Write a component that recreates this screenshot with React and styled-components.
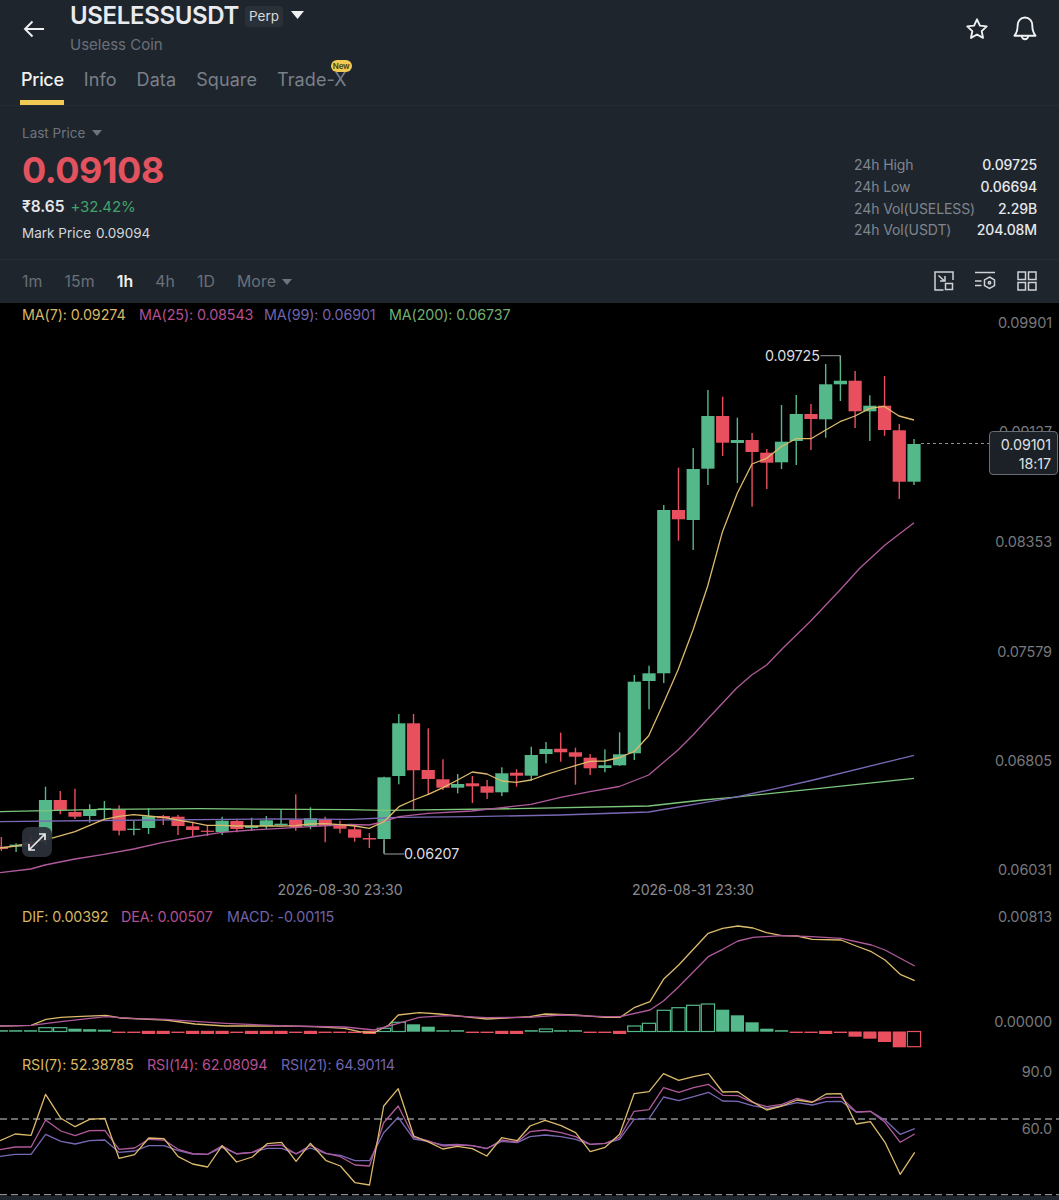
import React from 'react';
import styled, { createGlobalStyle } from 'styled-components';

const Global = createGlobalStyle`
  html, body { margin: 0; padding: 0; background: #000; }
  * { box-sizing: border-box; }
  body { font-family: Inter, "Noto Sans", "Liberation Sans", sans-serif; }
`;

const Page = styled.div`width: 1059px; height: 1200px; display: flex; flex-direction: column; background: #000; overflow: hidden;`;
const Top = styled.div`background: #1f252d; color: #fff;`;
const Header = styled.header`height: 64px; display: flex; align-items: flex-start;`;
const Back = styled.button`width: 70px; height: 58px; padding: 0 0 0 23px; border: 0; background: none; display: flex; align-items: center; color: #f0f1f3;`;
const TitleBlock = styled.div`flex: 1; display: flex; flex-direction: column;`;
const TitleRow = styled.div`height: 32px; display: flex; align-items: center;`;
const Symbol = styled.h1`margin: 0; font-size: 24px; font-weight: 600; line-height: 32px; letter-spacing: -0.35px; color: #e9ebee;`;
const Badge = styled.span`margin-left: 6px; width: 38px; height: 21px; border-radius: 3px; background: #2a3038; color: #d5d8dc; font-size: 13.5px; line-height: 21px; text-align: center;`;
const TitleCaret = styled.svg`margin-left: 8px; width: 13px; height: 8px; margin-top: -2px; fill: #eef0f2;`;
const SubTitle = styled.div`margin-top: 3px; font-size: 15px; line-height: 20px; color: #69707a;`;
const Actions = styled.div`display: flex; align-items: center; gap: 24px; height: 58px; padding-right: 22px; color: #f0f1f3;`;
const Tabs = styled.nav`height: 42px; padding-left: 21px; display: flex; gap: 20px; border-bottom: 1px solid #262c34;`;
const Tab = styled.div`position: relative; padding-top: 5px; font-size: 18px; line-height: 22px; letter-spacing: ${p => (p.$active ? '-0.3px' : '0.1px')}; color: ${p => (p.$active ? '#eef0f2' : '#79808a')}; font-weight: ${p => (p.$active ? 500 : 400)};
  ${p => p.$active ? `&::after { content: ''; position: absolute; left: -1px; right: 0; bottom: 0; height: 5px; background: #f0ca52; }` : ''}`;
const NewBadge = styled.span`position: absolute; right: -5px; top: -4px; width: 21px; height: 12px; border-radius: 6px; background: #f0ca52; color: #4a3d10; font-size: 8px; font-weight: 600; line-height: 12px; text-align: center; letter-spacing: -0.2px;`;
const PriceSection = styled.section`height: 154px; padding: 0 22px; display: flex; justify-content: space-between; border-bottom: 1px solid #262c34;`;
const PriceLeft = styled.div`display: flex; flex-direction: column; padding-top: 18px;`;
const LastPrice = styled.div`font-size: 13.5px; line-height: 18px; color: #6d747e; display: flex; align-items: center; gap: 7px;`;
const SmallCaret = styled.svg`width: 10px; height: 6px; fill: ${p => p.$color || '#6d747e'};`;
const BigPrice = styled.div`margin-top: 6px; font-size: 36px; font-weight: 700; line-height: 44px; letter-spacing: -0.45px; color: #e2535f;`;
const FiatRow = styled.div`margin-top: 5px; display: flex; gap: 6px; font-size: 15px; line-height: 20px;`;
const Fiat = styled.span`font-size: 15.5px; font-weight: 600; color: #e4e6e9;`;
const Change = styled.span`color: #42a26c; letter-spacing: -0.15px;`;
const MarkRow = styled.div`margin-top: 7px; display: flex; gap: 5px; font-size: 13.5px; line-height: 18px; color: #d4d7db;`;
const Stats = styled.div`padding-top: 48px; width: 183px; display: flex; flex-direction: column;`;
const StatRow = styled.div`height: 21.7px; display: flex; justify-content: space-between; align-items: center; font-size: 14px; letter-spacing: -0.1px;`;
const StatLabel = styled.span`color: #7e858e;`;
const StatValue = styled.span`color: #e6e8eb; font-weight: 500;`;
const IntervalBar = styled.div`height: 43px; padding: 0 22px; display: flex; align-items: center; justify-content: space-between;`;
const Intervals = styled.div`display: flex; align-items: center; gap: 22px;`;
const Interval = styled.span`font-size: 15.8px; color: ${p => (p.$active ? '#eef0f2' : '#69707a')}; font-weight: ${p => (p.$active ? 600 : 400)}; display: flex; align-items: center; gap: 6px; letter-spacing: 0.1px;`;
const Tools = styled.div`display: flex; align-items: center; gap: 21px; margin-top: -2px; color: #cfd2d6;`;
const Pane = styled.div`position: relative; height: ${p => p.$h}px; flex: none;`;
const ChartSvg = styled.svg`display: block; width: 1059px; height: 100%;`;
const Legend = styled.div`position: absolute; left: 22px; top: ${p => p.$top}px; display: flex; font-size: 14.3px; line-height: 18px; letter-spacing: -0.1px;`;
const LegendItem = styled.span`color: ${p => p.$color}; width: ${p => p.$w}px;`;
const Footer = styled.div`flex: 1; background: #1f252d;`;
const ExpandBtn = styled.div`position: absolute; left: 22px; top: 524px; width: 30px; height: 30px; border-radius: 7px; background: rgba(44,50,58,.93); display: flex; align-items: center; justify-content: center; color: #e8e9eb;`;
const PriceTag = styled.div`position: absolute; left: 989px; top: 128px; width: 69px; height: 44px; border: 1px solid #6a6e74; border-radius: 4px; background: #1c2027; color: #dfe1e4; font-size: 14.3px; line-height: 19px; text-align: right; letter-spacing: -0.1px; padding: 3px 6px 0 0;`;

const Wick = styled.rect`fill: ${p => p.$c};`;
const Body = styled.rect`fill: ${p => p.$c};`;
const Bar = styled.rect`fill: ${p => (p.$hollow ? 'none' : p.$c)}; stroke: ${p => (p.$hollow ? p.$c : 'none')}; stroke-width: 1.2;`;
const Curve = styled.polyline`fill: none; stroke: ${p => p.$c}; stroke-width: ${p => p.$w || 1.3}; stroke-linejoin: round;`;
const Guide = styled.polyline`fill: none; stroke: ${p => p.$c || '#8a8d91'}; stroke-width: 1;`;
const Dash = styled.line`stroke: ${p => p.$c || '#8d8f92'}; stroke-width: ${p => p.$w || 1.3}; stroke-dasharray: ${p => p.$d || '7 4'};`;
const AxisText = styled.text`fill: #77797c; font-size: 14.5px; text-anchor: end; letter-spacing: -0.1px;`;
const DateText = styled.text`fill: #8a8c90; font-size: 14.2px; text-anchor: middle; letter-spacing: -0.1px;`;
const MarkText = styled.text`fill: #dcdee0; font-size: 14.3px; letter-spacing: -0.1px;`;

const G = '#55b88a';
const R = '#e8505f';
const YEL = '#dcba6b';
const PNK = '#b05a9c';
const PUR = '#7a68b4';
const GRN = '#7cc67c';

const candles = [
  [R,837,846.7,849,851],[G,843.3,844.7,846.7,852],[R,835,842,846,850],[G,786.7,800,838,845],
  [R,791,800,810,814.3],[R,788.7,812,816.7,819],[G,804.3,810,816,822.7],[G,801,808.3,809.6,819.3],
  [R,805.3,809.7,830.7,835.3],[G,820.7,828.7,830,835.3],[G,808.3,816.3,828,834],[R,815,816,818.3,825],
  [R,815,816.7,826,835],[R,821.7,826.3,830,836],[R,825,830.7,831.9,836],[G,816.7,820.7,832,835],
  [R,819,821,829,832.3],[G,817.7,826,828,830.7],[G,816,820.3,826,829],[G,809.3,823.7,825,825],
  [R,794.3,820,827,830.7],[G,807.3,818.3,826,829.3],[R,816.7,819.3,826,842.3],[R,820.7,824,828.7,833.3],
  [R,825,829.3,837.7,841.7],[R,833,838,839.5,848],[G,776.7,777.3,839,853.3],[G,714,723.3,776,784.3],
  [R,714,723.3,770.3,810],[R,728.3,770,779,795],[R,759.3,779.3,787.7,790],[G,774,784,787.7,793.3],
  [R,776,783.3,786.3,803],[R,780,786.3,792.7,799],[G,767.3,773.3,792.3,796],[R,769.3,772.7,775.7,786.7],
  [G,746.7,755,775.7,780.7],[G,742,749,754,763.3],[R,732.7,748.7,752.3,761.7],[R,747.7,752.3,756.7,784.7],
  [R,754,757.7,768.3,775],[G,749.3,765.3,768,772.3],[G,732.3,754.3,765.3,766],[G,675,681.7,753.3,760],
  [G,665.7,673.3,681,709.3],[G,505,510,673.3,683],[R,467.7,510,519.3,540.7],[G,448,469,520,550],
  [G,390,416,468.7,485],[R,396.7,416,442.7,456],[G,417.7,440,443,483],[R,433,440,452,506.7],
  [R,449,452.7,462.7,489],[G,405,441.7,462.3,469],[G,395,414,441,465],[R,404,414,419,450],
  [G,364,384.3,419.3,437.7],[G,355.7,380.7,384.3,401],[R,371,380.7,411.3,428],[G,395.3,405.7,411.3,441],
  [R,376,405.7,430,435.7],[R,424,430.3,481.7,499],[G,439,444,481.7,485],
];
const cx = i => 914 - 14.72 * (candles.length - 1 - i);

const ma7 = [[0,848],[15.7,846],[30,843],[45,840],[52,838],[75,831.7],[104,819.3],[119,816.3],[133.7,814.7],[148,816],[163,817.3],[177.7,820],[192,822.3],[207,825.3],[222,825.3],[237,826],[266,826],[281,826],[295.7,825.7],[310,824],[325,823.7],[339.7,824.7],[350,825.5],[355,826],[369.3,828.3],[384,821.7],[399,806.7],[413.7,800],[428.3,794.3],[443,787.7],[457.7,780],[472.3,772],[487,774],[501.7,781],[516.3,782.3],[531,780],[545.7,774.7],[560.7,770],[575.3,765.7],[590,761.3],[604.7,761],[619.3,757.5],[634,751.7],[648.7,735.7],[663.7,702.7],[678,670],[693,630],[707.7,586],[722.5,531.7],[737.3,493.3],[752,464],[766.7,458.3],[781,446.7],[796,438.7],[811,438.7],[825.7,430],[840,421.7],[855,416],[869.7,408.3],[884,406.3],[899,416],[914,420]];
const ma25 = [[0,872.7],[30.7,869],[45,865],[75,859],[104,854.3],[133.7,849],[163,842.3],[192,837],[222,832.3],[251.7,830],[281,828.3],[310,826.7],[350,824.5],[369,825],[384,821.7],[399,816.7],[428,813.3],[472,811],[501.7,807.7],[531,804.3],[560.7,797.3],[590,791.7],[619.3,786.5],[648.7,775],[678,750],[693,735],[707.7,719],[736.7,688],[751.7,675],[766.7,665],[783,648],[810,621.7],[840,590],[860,568],[885,545],[914,522.7]];
const ma99 = [[0,821.7],[100,820.5],[272,819],[350,819.3],[384,818],[399,817.3],[472,816.7],[560,815],[648.7,812],[700,803.3],[733,797.7],[776.7,788.3],[813.3,780],[914,755.3]];
const ma200 = [[0,811.7],[104,809.3],[200,808.7],[350,809.7],[384,810.3],[516,808.7],[648.7,806],[703,800],[733,797.3],[820,788.3],[914,778.3]];

const dx = (pts, o = 0) => pts.map(([x, y]) => [o + x / 2.958, 900 + y / 3]);
const difL = [[0,378],[92,376],[136,358],[180,352],[225,350],[313,346],[357,354],[489,360],[577,372],[666,378],[843,378],[931,380],[1019,385],[1063,395],[1107,398],[1150,375],[1178,345],[1240,338],[1300,342],[1440,357]];
const deaL = [[0,378],[92,376],[180,365],[313,350],[400,356],[489,358],[666,370],[843,378],[1019,381],[1107,390],[1178,370],[1240,352],[1320,347],[1440,353]];
const difR = [[0,350],[45,342],[135,345],[220,352],[267,352],[310,322],[355,305],[395,238],[440,195],[527,100],[570,85],[615,78],[660,84],[700,98],[745,107],[790,108],[835,118],[920,120],[965,138],[1010,155],[1050,180],[1095,223],[1138,242]];
const deaR = [[0,352],[90,345],[220,350],[267,350],[355,330],[395,303],[440,260],[527,170],[570,148],[615,123],[660,112],[745,107],[835,110],[920,115],[1010,135],[1050,150],[1138,198]];

const rsi7L = [[0,722],[45,702],[92,706],[135,583],[180,655],[222,680],[265,658],[310,655],[352,775],[398,764],[440,714],[485,716],[527,770],[570,792],[614,801],[657,737],[700,786],[746,771],[790,731],[833,727],[876,784],[918,730],[965,782],[1007,798],[1050,848],[1093,855],[1135,618],[1178,566],[1224,708],[1265,725],[1310,747],[1353,739],[1397,746],[1440,768],[1484,713],[1530,722]];
const rsi14L = [[0,749],[45,741],[92,741],[135,660],[180,693],[222,707],[265,692],[310,691],[352,748],[398,744],[440,718],[485,720],[527,748],[570,761],[614,763],[657,737],[700,762],[746,757],[790,737],[833,735],[876,762],[918,736],[965,760],[1007,770],[1050,795],[1093,798],[1135,668],[1178,618],[1224,712],[1265,722],[1310,738],[1353,735],[1397,737],[1440,746],[1484,720],[1530,726]];
const rsi21L = [[0,769],[45,763],[92,763],[135,703],[180,724],[222,732],[265,722],[310,720],[352,757],[398,753],[440,737],[485,737],[527,752],[570,762],[614,763],[657,742],[700,761],[746,757],[790,745],[833,745],[876,761],[918,744],[965,761],[1007,766],[1050,782],[1093,782],[1135,698],[1178,652],[1224,717],[1265,724],[1310,735],[1353,733],[1397,737],[1440,745],[1484,724],[1530,728]];
const rsi7R = [[0,678],[45,661],[92,677],[135,698],[178,755],[222,742],[265,703],[308,581],[352,575],[395,521],[440,541],[484,530],[528,521],[570,576],[615,575],[658,605],[700,630],[745,618],[790,600],[835,607],[876,582],[920,581],[965,672],[1007,665],[1050,727],[1095,823],[1138,757]];
const rsi14R = [[0,695],[45,690],[92,698],[135,710],[178,733],[222,730],[265,712],[308,634],[352,629],[395,563],[440,577],[484,563],[528,553],[570,586],[615,587],[658,607],[700,620],[745,613],[790,595],[835,606],[876,592],[920,592],[965,636],[1007,634],[1050,667],[1095,727],[1138,702]];
const rsi21R = [[0,710],[45,705],[92,710],[135,718],[178,733],[222,730],[265,718],[308,658],[352,656],[395,591],[440,602],[484,590],[528,577],[570,603],[615,604],[658,617],[700,625],[745,618],[790,608],[835,615],[876,605],[920,604],[965,636],[1007,634],[1050,660],[1095,703],[1138,686]];

const join = (l, r) => [...dx(l), ...dx(r, 530)];
const pts = a => a.map(([x, y]) => `${x.toFixed(1)},${y.toFixed(1)}`).join(' ');

const thinG = x => ({ x, c: G, t: 1030.2, b: 1031.7 });
const thinR = x => ({ x, c: R, t: 1031.6, b: 1033 });
const midR = x => ({ x, c: R, t: 1030.8, b: 1034 });
const bars = [
  thinG(1.4), thinG(15.7), thinG(30.5),
  { x: 45.5, c: G, t: 1027.7, b: 1031.5, h: 1 }, { x: 60.2, c: G, t: 1027.7, b: 1031.5, h: 1 },
  { x: 75, c: G, t: 1028.7, b: 1031.7 }, { x: 89.7, c: G, t: 1029.2, b: 1031.7 }, { x: 104.4, c: G, t: 1029.7, b: 1031.7 },
  thinR(119), thinR(133.8), midR(148.5), midR(163.2), thinR(178), midR(192.6), midR(207.4), midR(222.1), thinR(236.8),
  midR(251.5), midR(266.3), midR(281), thinR(295.7), midR(310.4), thinR(325.1), thinR(339.8), thinR(354.6), midR(369.3),
  { x: 384, c: G, t: 1028.3, b: 1031.5, h: 1 }, { x: 398.7, c: G, t: 1022.3, b: 1031.5, h: 1 },
  { x: 413.5, c: G, t: 1024.3, b: 1031.7 }, { x: 428.2, c: G, t: 1026.7, b: 1031.7 }, thinG(442.9), thinG(457.6),
  thinR(472.4), thinR(487.1), midR(501.8), midR(516.5), thinG(531.2),
  { x: 546, c: G, t: 1029, b: 1031.7, h: 1 }, thinG(560.7), thinG(575.4), thinR(590.1), thinR(604.8), midR(619.6),
  { x: 634.3, c: G, t: 1026, b: 1031.5, h: 1 }, { x: 649, c: G, t: 1023.3, b: 1031.5, h: 1 },
  { x: 663.8, c: G, t: 1010.3, b: 1031.5, h: 1 }, { x: 678.5, c: G, t: 1007.7, b: 1031.5, h: 1 },
  { x: 693.2, c: G, t: 1005.3, b: 1031.5, h: 1 }, { x: 707.9, c: G, t: 1004, b: 1031.5, h: 1 },
  { x: 722.7, c: G, t: 1009.7, b: 1031.7 }, { x: 737.4, c: G, t: 1015.3, b: 1031.7 }, { x: 752.1, c: G, t: 1022.3, b: 1031.7 },
  { x: 766.8, c: G, t: 1028.7, b: 1031.7 }, thinG(781.6), thinR(796.3), thinR(811), midR(825.7), thinR(840.4),
  { x: 855.1, c: R, t: 1031.5, b: 1036.7 }, { x: 869.9, c: R, t: 1031.5, b: 1038.7 }, { x: 884.6, c: R, t: 1031.5, b: 1042 },
  { x: 899.3, c: R, t: 1031.5, b: 1047.3 }, { x: 914, c: R, t: 1031.5, b: 1046.7, h: 1 },
];

const Caret = ({ $color }) => <SmallCaret $color={$color} viewBox="0 0 10 6"><path d="M0 0h10L5 6z" /></SmallCaret>;

export default function App() {
  return (
    <Page>
      <Global />
      <Top>
        <Header>
          <Back aria-label="Back">
            <svg width="22" height="18" viewBox="0 0 22 18" fill="none" stroke="currentColor" strokeWidth="1.9"><path d="M21 9H2M9.5 1.5 2 9l7.5 7.5" /></svg>
          </Back>
          <TitleBlock>
            <TitleRow>
              <Symbol>USELESSUSDT</Symbol>
              <Badge>Perp</Badge>
              <TitleCaret viewBox="0 0 13 8"><path d="M0 0h13L6.5 8z" /></TitleCaret>
            </TitleRow>
            <SubTitle>Useless Coin</SubTitle>
          </TitleBlock>
          <Actions>
            <svg width="24" height="24" viewBox="0 0 24 24" fill="none" stroke="currentColor" strokeWidth="1.9" strokeLinejoin="round"><path d="M12 2.3l2.9 6.3 6.8.8-5 4.7 1.3 6.8-6-3.4-6 3.4 1.3-6.8-5-4.7 6.8-.8z" /></svg>
            <svg width="24" height="26" viewBox="0 0 24 26" fill="none" stroke="currentColor" strokeWidth="1.9" strokeLinejoin="round"><path d="M12 1.5c-4.6 0-7.3 3.5-7.3 7.8 0 5-1.2 8-3.2 10.4h21c-2-2.4-3.2-5.4-3.2-10.4 0-4.3-2.7-7.8-7.3-7.8z" /><path d="M8.8 20a3.2 3.2 0 0 0 6.4 0" /></svg>
          </Actions>
        </Header>
        <Tabs>
          <Tab $active>Price</Tab>
          <Tab>Info</Tab>
          <Tab>Data</Tab>
          <Tab>Square</Tab>
          <Tab>Trade-X<NewBadge>New</NewBadge></Tab>
        </Tabs>
        <PriceSection>
          <PriceLeft>
            <LastPrice>Last Price <Caret /></LastPrice>
            <BigPrice>0.09108</BigPrice>
            <FiatRow><Fiat>₹8.65</Fiat><Change>+32.42%</Change></FiatRow>
            <MarkRow><span>Mark Price</span><span>0.09094</span></MarkRow>
          </PriceLeft>
          <Stats>
            <StatRow><StatLabel>24h High</StatLabel><StatValue>0.09725</StatValue></StatRow>
            <StatRow><StatLabel>24h Low</StatLabel><StatValue>0.06694</StatValue></StatRow>
            <StatRow><StatLabel>24h Vol(USELESS)</StatLabel><StatValue>2.29B</StatValue></StatRow>
            <StatRow><StatLabel>24h Vol(USDT)</StatLabel><StatValue>204.08M</StatValue></StatRow>
          </Stats>
        </PriceSection>
        <IntervalBar>
          <Intervals>
            <Interval>1m</Interval>
            <Interval>15m</Interval>
            <Interval $active>1h</Interval>
            <Interval>4h</Interval>
            <Interval>1D</Interval>
            <Interval>More <Caret /></Interval>
          </Intervals>
          <Tools>
            <svg width="20" height="20" viewBox="0 0 20 20" fill="none" stroke="currentColor" strokeWidth="1.5"><path d="M19 9V1H1v18h8.5" /><rect x="11.5" y="12.5" width="7" height="6" /><path d="M4.5 4.5l6 5.5M6 10h5V5" /></svg>
            <svg width="21" height="20" viewBox="0 0 21 20" fill="none" stroke="currentColor" strokeWidth="1.5"><path d="M0 1.5h20M0 10h6.5M0 14.5h6.5" /><path d="M14.5 6l5 2.9v5.7l-5 2.9-5-2.900V8.900z" /><circle cx="14.5" cy="11.8" r="1.2" /></svg>
            <svg width="20" height="20" viewBox="0 0 20 20" fill="none" stroke="currentColor" strokeWidth="1.5"><rect x="1" y="1" width="7.5" height="7.5" /><rect x="11.5" y="1" width="7.5" height="7.5" /><rect x="1" y="11.5" width="7.5" height="7.5" /><rect x="11.5" y="11.5" width="7.5" height="7.5" /></svg>
          </Tools>
        </IntervalBar>
      </Top>

      <Pane $h={602}>
        <ChartSvg viewBox="0 303 1059 602">
          {candles.map(([c, wt, bt, bb, wb], i) => (
            <g key={i}>
              <Wick $c={c} x={cx(i) - 0.7} y={wt} width={1.4} height={wb - wt} />
              <Body $c={c} x={cx(i) - 6.6} y={bt} width={13.2} height={bb - bt} />
            </g>
          ))}
          <Curve $c={GRN} points={pts(ma200)} />
          <Curve $c={PUR} points={pts(ma99)} />
          <Curve $c={PNK} points={pts(ma25)} />
          <Curve $c={YEL} points={pts(ma7)} />
          <Guide $c="#9a9c9f" points="820.5,355.7 840.3,355.7 840.3,362" />
          <MarkText x="765" y="361">0.09725</MarkText>
          <Guide $c="#9a9c9f" points="384,840 384,854 404,854" />
          <MarkText x="404" y="859">0.06207</MarkText>
          <Dash $c="#8d8f92" $w={1} $d="3 3" x1="921" y1="443.5" x2="990" y2="443.5" />
          <AxisText x="1052" y="328">0.09901</AxisText>
          <AxisText x="1052" y="437">0.09127</AxisText>
          <AxisText x="1052" y="547">0.08353</AxisText>
          <AxisText x="1052" y="657">0.07579</AxisText>
          <AxisText x="1052" y="766">0.06805</AxisText>
          <AxisText x="1052" y="875">0.06031</AxisText>
          <DateText x="340" y="895">2026-08-30 23:30</DateText>
          <DateText x="693" y="895">2026-08-31 23:30</DateText>
        </ChartSvg>
        <Legend $top={3}>
          <LegendItem $w={117} $color="#d8b765">MA(7): 0.09274</LegendItem>
          <LegendItem $w={125} $color="#b44f94">MA(25): 0.08543</LegendItem>
          <LegendItem $w={125} $color="#7163ad">MA(99): 0.06901</LegendItem>
          <LegendItem $w={125} $color="#72ae70">MA(200): 0.06737</LegendItem>
        </Legend>
        <ExpandBtn>
          <svg width="22" height="22" viewBox="0 0 22 22" fill="none" stroke="currentColor" strokeWidth="1.7"><path d="M3 19 19 3M13 3h6v6M3 13v6h6" /></svg>
        </ExpandBtn>
        <PriceTag>0.09101<br />18:17</PriceTag>
      </Pane>

      <Pane $h={148}>
        <ChartSvg viewBox="0 905 1059 148">
          {bars.map((b, i) => (
            <Bar key={i} $c={b.c} $hollow={b.h} x={b.x - 6.6} y={b.t} width={13.2} height={b.b - b.t} />
          ))}
          <Curve $c={YEL} points={pts(join(difL, difR))} />
          <Curve $c={PNK} points={pts(join(deaL, deaR))} />
          <AxisText x="1052" y="922">0.00813</AxisText>
          <AxisText x="1052" y="1027">0.00000</AxisText>
        </ChartSvg>
        <Legend $top={3}>
          <LegendItem $w={99} $color="#d8b765">DIF: 0.00392</LegendItem>
          <LegendItem $w={106} $color="#b44f94">DEA: 0.00507</LegendItem>
          <LegendItem $w={125} $color="#7163ad">MACD: -0.00115</LegendItem>
        </Legend>
      </Pane>

      <Pane $h={143}>
        <ChartSvg viewBox="0 1053 1059 143">
          <Dash x1="0" y1="1119" x2="1059" y2="1119" />
          <Dash x1="0" y1="1194.7" x2="1059" y2="1194.7" />
          <Curve $c={PUR} points={pts(join(rsi21L, rsi21R))} />
          <Curve $c={PNK} points={pts(join(rsi14L, rsi14R))} />
          <Curve $c={YEL} points={pts(join(rsi7L, rsi7R))} />
          <AxisText x="1052" y="1077">90.0</AxisText>
          <AxisText x="1052" y="1134">60.0</AxisText>
        </ChartSvg>
        <Legend $top={3}>
          <LegendItem $w={125} $color="#d8b765">RSI(7): 52.38785</LegendItem>
          <LegendItem $w={134} $color="#b44f94">RSI(14): 62.08094</LegendItem>
          <LegendItem $w={135} $color="#7163ad">RSI(21): 64.90114</LegendItem>
        </Legend>
      </Pane>
      <Footer />
    </Page>
  );
}
